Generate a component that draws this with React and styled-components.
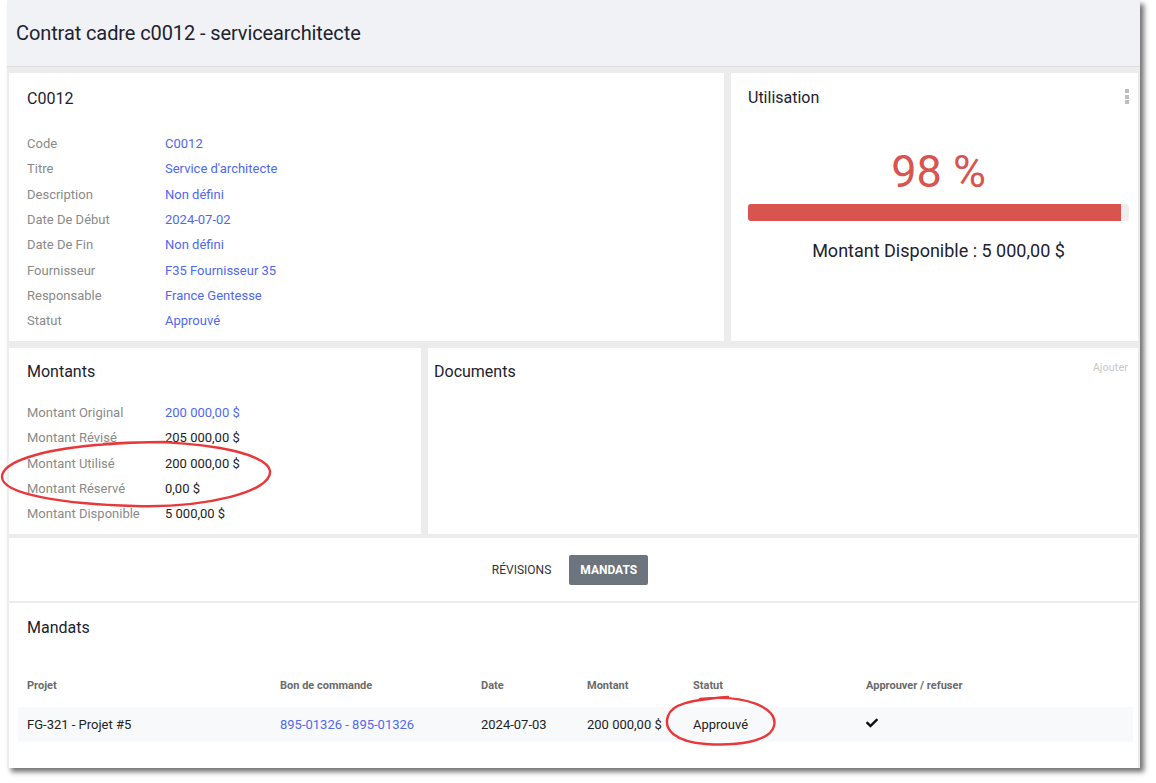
import React from "react";
import styled, { createGlobalStyle } from "styled-components";
import { FaCheck } from "react-icons/fa";

const GlobalStyle = createGlobalStyle`
  body {
    margin: 0;
    background: #fff;
    font-family: Roboto, "Liberation Sans", Arial, sans-serif;
    color: #222;
  }
`;

const Page = styled.div`
  position: relative;
  width: 1156px;
  height: 783px;
  overflow: hidden;
`;

const Frame = styled.div`
  margin-left: 7px;
  width: 1133px;
  height: 768px;
  background: #ececec;
  box-shadow: 4px 4px 5px rgba(0, 0, 0, 0.55);
  display: flex;
  flex-direction: column;
`;

const Header = styled.header`
  height: 66px;
  flex-shrink: 0;
  background: #f1f2f6;
  border-bottom: 1px solid #dcdde1;
  display: flex;
  align-items: center;
  padding-left: 9px;
  font-size: 20px;
  letter-spacing: -0.1px;
  color: #1d2230;
  white-space: pre;
`;

const Card = styled.section`
  background: #fff;
  width: ${p => (p.w ? `${p.w}px` : "auto")};
  flex: ${p => (p.w ? "none" : 1)};
  padding: ${p => p.pad || "16px 9px 0 18px"};
  box-sizing: border-box;
`;

const Body = styled.div`
  flex: 1;
  display: flex;
  flex-direction: column;
  padding: 0 2px;
`;

const Row = styled.div`
  display: flex;
  gap: 7px;
  height: ${p => p.h}px;
  margin-top: ${p => p.mt}px;
  flex-shrink: 0;
`;

const CardTitle = styled.h2`
  margin: 0;
  font-size: 16px;
  line-height: 20px;
  font-weight: 400;
  color: #1d2230;
`;

const TitleRow = styled.div`
  display: flex;
  justify-content: space-between;
  align-items: flex-start;
`;

const InfoList = styled.dl`
  margin: ${p => p.mt}px 0 0;
`;

const InfoRow = styled.div`
  display: grid;
  grid-template-columns: 138px 1fr;
  height: 25.3px;
  align-items: center;
  font-size: 13px;
`;

const Label = styled.dt`
  color: #8a8a8a;
`;

const Value = styled.dd`
  margin: 0;
  color: ${p => (p.link ? "#5068f0" : "#222")};
`;

const Kebab = styled.div`
  display: flex;
  flex-direction: column;
  gap: 1.5px;
  margin-top: 1px;
  span {
    width: 4px;
    height: 4px;
    background: #bdbdbd;
  }
`;

const Percent = styled.div`
  margin-top: 38px;
  text-align: center;
  font-size: 45px;
  line-height: 52px;
  color: #d9534f;
`;

const Bar = styled.div`
  margin-top: 6px;
  height: 17px;
  background: #eeeeee;
  border-radius: 3px;
  overflow: hidden;
`;

const Fill = styled.div`
  height: 100%;
  background: #d9534f;
`;

const Available = styled.div`
  margin-top: 18px;
  text-align: center;
  font-size: 18px;
  line-height: 24px;
  color: #1d2230;
`;

const AddLink = styled.a`
  font-size: 11px;
  color: #c8c8c8;
  margin-top: -1px;
  cursor: pointer;
`;

const TabBar = styled.nav`
  height: 63px;
  margin-top: 4px;
  flex-shrink: 0;
  background: #fff;
  display: flex;
  justify-content: center;
  align-items: center;
  gap: 8px;
  padding-right: 17px;
`;

const Tab = styled.button`
  height: 30px;
  padding: 0 ${p => (p.active ? 11 : 10)}px;
  border: none;
  border-radius: 2px;
  font-family: inherit;
  font-size: 12px;
  font-weight: ${p => (p.active ? 700 : 400)};
  background: ${p => (p.active ? "#6c757d" : "transparent")};
  color: ${p => (p.active ? "#fff" : "#333")};
`;

const MandatsCard = styled.section`
  flex: 1;
  margin-top: 2px;
  background: #fff;
  padding: 15px 5px 0 9px;
`;

const MandatsTitle = styled(CardTitle)`
  margin-left: 9px;
`;

const Grid = styled.div`
  display: grid;
  grid-template-columns: 253px 201px 106px 106px 173px 1fr;
  align-items: center;
  height: ${p => p.h}px;
  margin-top: ${p => p.mt}px;
  background: ${p => p.bg || "transparent"};
  & > div {
    padding-left: 9px;
  }
`;

const HeadCell = styled.div`
  font-size: 11px;
  font-weight: 700;
  color: #6b6b6b;
`;

const Cell = styled.div`
  font-size: 13px;
  color: ${p => (p.link ? "#5068f0" : "#222")};
`;

const Annotations = styled.svg`
  position: absolute;
  top: 0;
  left: 0;
  pointer-events: none;
`;

const contrat = [
  ["Code", "C0012"],
  ["Titre", "Service d'architecte"],
  ["Description", "Non défini"],
  ["Date De Début", "2024-07-02"],
  ["Date De Fin", "Non défini"],
  ["Fournisseur", "F35 Fournisseur 35"],
  ["Responsable", "France Gentesse"],
  ["Statut", "Approuvé"]
];

const montants = [
  ["Montant Original", "200 000,00 $", true],
  ["Montant Révisé", "205 000,00 $"],
  ["Montant Utilisé", "200 000,00 $"],
  ["Montant Réservé", "0,00 $"],
  ["Montant Disponible", "5 000,00 $"]
];

const usage = 98;

const App = () => (
  <Page>
    <GlobalStyle />
    <Frame>
      <Header>Contrat cadre c0012 - servicearchitecte</Header>
      <Body>
        <Row h={268} mt={6}>
          <Card w={715}>
            <CardTitle>C0012</CardTitle>
            <InfoList mt={22}>
              {contrat.map(([l, v]) => (
                <InfoRow key={l}>
                  <Label>{l}</Label>
                  <Value link>{v}</Value>
                </InfoRow>
              ))}
            </InfoList>
          </Card>
          <Card pad="15px 9px 0 17px">
            <TitleRow>
              <CardTitle>Utilisation</CardTitle>
              <Kebab>
                <span />
                <span />
                <span />
              </Kebab>
            </TitleRow>
            <Percent>{usage} %</Percent>
            <Bar>
              <Fill style={{ width: `${usage}%` }} />
            </Bar>
            <Available>Montant Disponible : 5 000,00 $</Available>
          </Card>
        </Row>
        <Row h={186} mt={7}>
          <Card w={412} pad="14px 9px 0 18px">
            <CardTitle>Montants</CardTitle>
            <InfoList mt={18}>
              {montants.map(([l, v, link]) => (
                <InfoRow key={l}>
                  <Label>{l}</Label>
                  <Value link={link}>{v}</Value>
                </InfoRow>
              ))}
            </InfoList>
          </Card>
          <Card pad="14px 10px 0 6px">
            <TitleRow>
              <CardTitle>Documents</CardTitle>
              <AddLink>Ajouter</AddLink>
            </TitleRow>
          </Card>
        </Row>
        <TabBar>
          <Tab>RÉVISIONS</Tab>
          <Tab active>MANDATS</Tab>
        </TabBar>
        <MandatsCard>
          <MandatsTitle>Mandats</MandatsTitle>
          <Grid h={30} mt={32}>
            <HeadCell>Projet</HeadCell>
            <HeadCell>Bon de commande</HeadCell>
            <HeadCell>Date</HeadCell>
            <HeadCell>Montant</HeadCell>
            <HeadCell>Statut</HeadCell>
            <HeadCell>Approuver / refuser</HeadCell>
          </Grid>
          <Grid h={35} mt={7} bg="#f8f9fa">
            <Cell>FG-321 - Projet #5</Cell>
            <Cell link>895-01326 - 895-01326</Cell>
            <Cell>2024-07-03</Cell>
            <Cell>200 000,00 $</Cell>
            <Cell>Approuvé</Cell>
            <Cell>
              <FaCheck size={12} color="#111" />
            </Cell>
          </Grid>
        </MandatsCard>
      </Body>
    </Frame>
    <Annotations width="1156" height="783" viewBox="0 0 1156 783">
      <g fill="none" stroke="#e8383b" strokeWidth="2.4" strokeLinecap="round">
        <path d="M 104 444 C 190 437 268 452 270 471 C 272 492 205 508 135 506 C 62 504 2 494 2 477 C 2 462 40 450 96 445 C 120 443 140 442 165 442" />
        <path d="M 700 699 C 746 694 779 708 774 726 C 770 742 736 746 706 744 C 676 742 663 730 668 716 C 672 704 690 700 728 697" />
      </g>
    </Annotations>
  </Page>
);

export default App;
